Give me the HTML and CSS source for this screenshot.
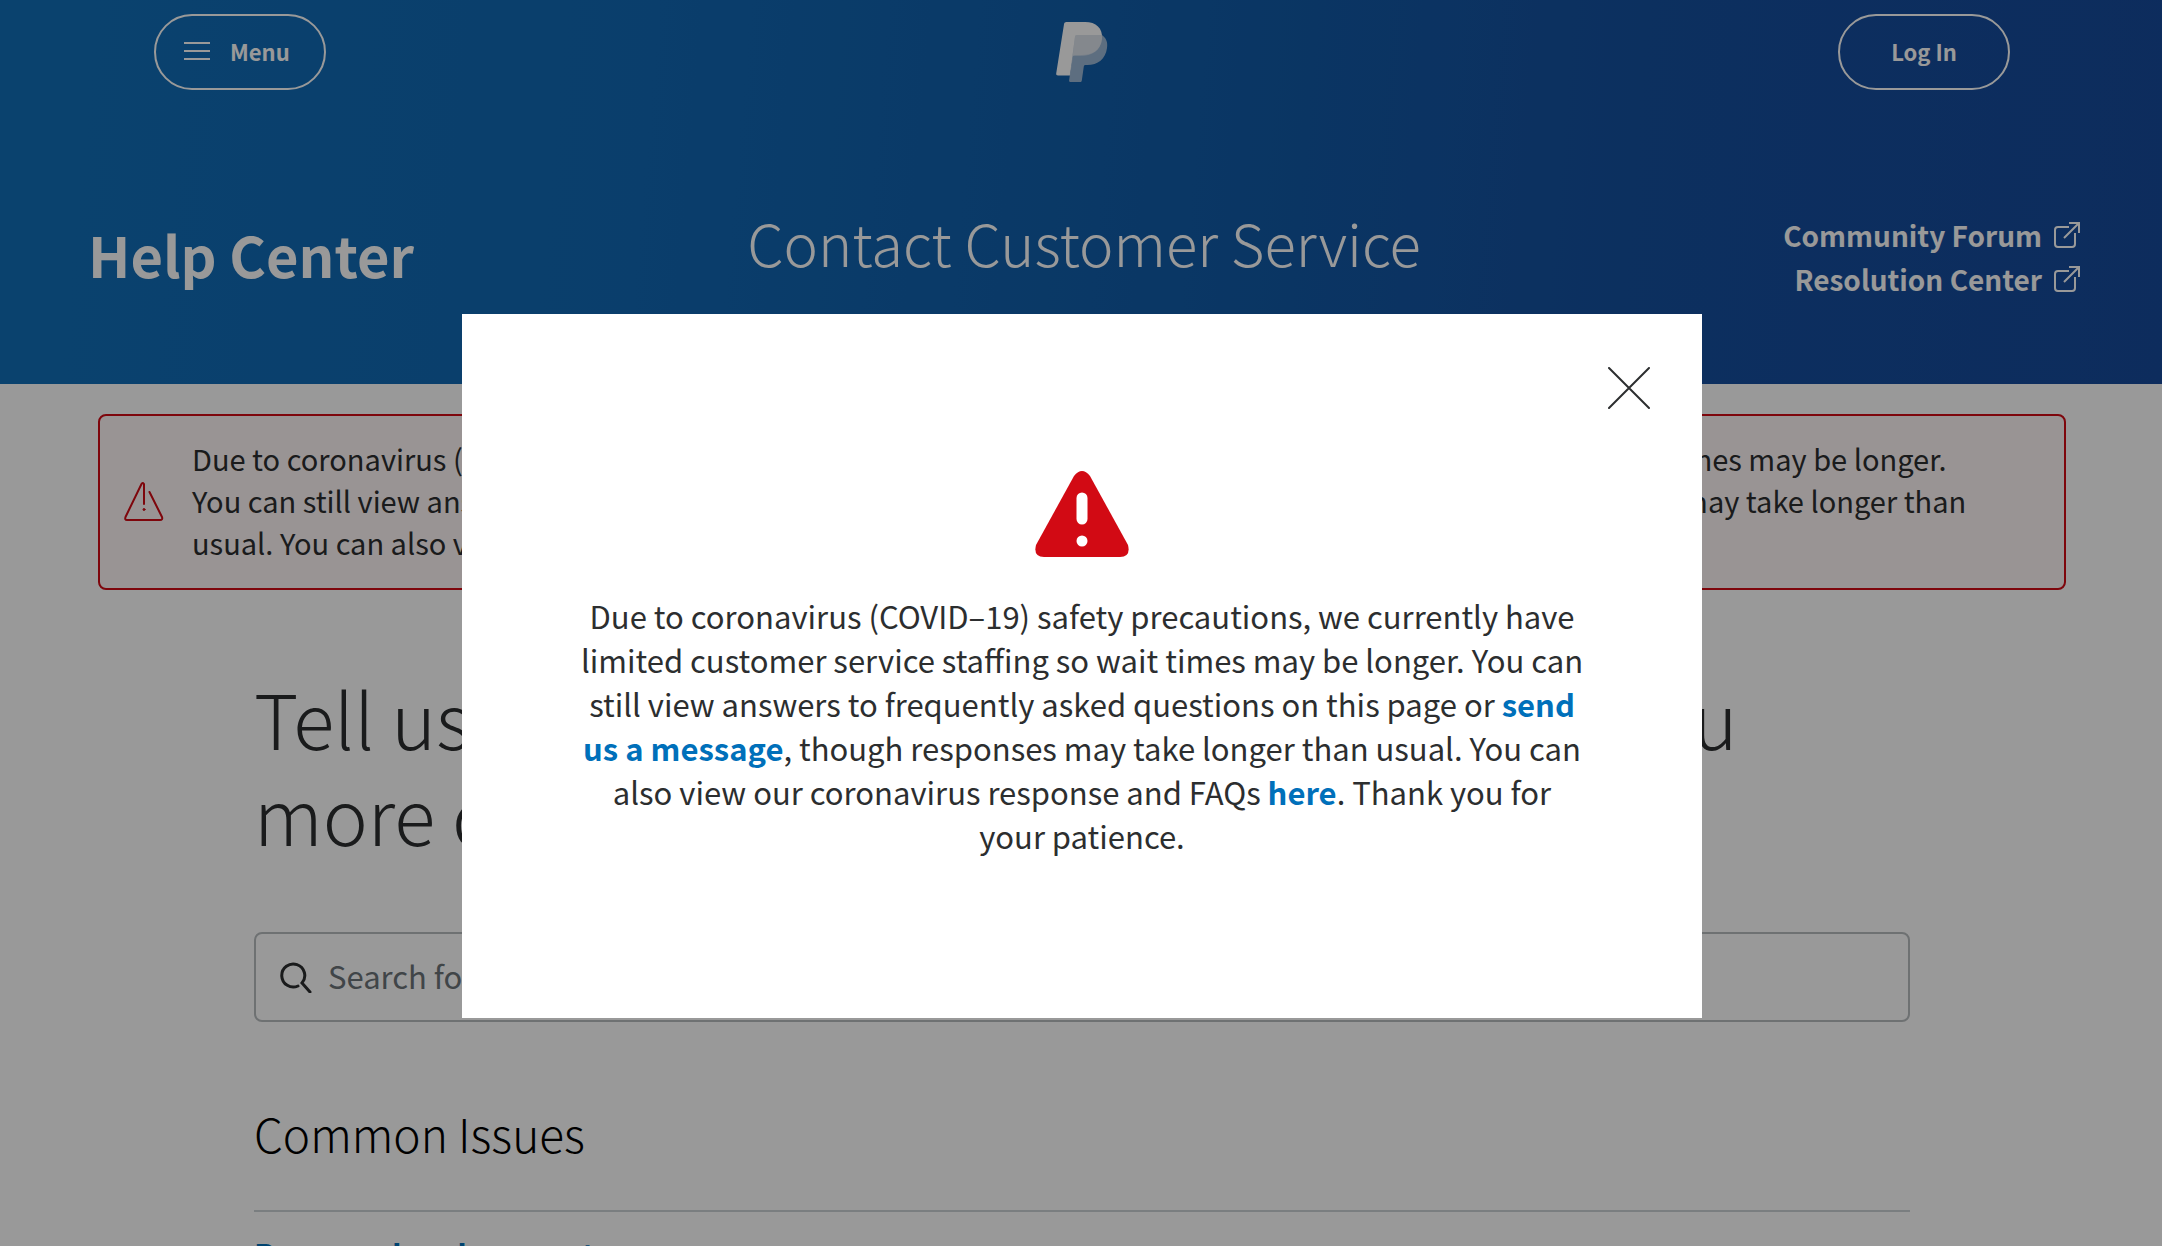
FILE: index.html
```html
<!DOCTYPE html>
<html lang="en">
<head>
    <meta charset="UTF-8">
    <meta name="viewport" content="width=device-width, initial-scale=1.0">
    <title>Contact Customer Service</title>
    <link rel="stylesheet" href="styles.css">
</head>
<body>
    <header class="header">
        <nav class="topbar">
            <button type="button" class="pill">
                <svg class="burger" width="26" height="18" viewBox="0 0 26 18" aria-hidden="true">
                    <path d="M0 1h26M0 9h26M0 17h26" stroke="currentColor" stroke-width="2"/>
                </svg>
                Menu
            </button>
            <a href="#" class="logo" aria-label="PayPal">
                <svg width="52" height="60" viewBox="0 0 52 60">
                    <path d="M10.500 0H29C40 0 47 6 46 17C44.500 29 36 34 24 34H17L14 53.500H2C.7 53.500 0 52.600.2 51.500L8 2.300C8.200.9 9.100 0 10.500 0Z" fill="#fff"/>
                    <path d="M21 13H46C50 16 52 20 51 26C49.500 37 42 43 31 43H29.500C28.500 43 28 43.500 27.800 44.500L25.800 58.500C25.600 59.500 25 60 24 60H14.500C13.500 60 13 59.400 13.100 58.500L19 15C19.200 13.700 19.700 13 21 13Z" fill="#b5c8dd" fill-opacity=".85"/>
                    <path d="M21 13H46Q46.300 15 46 17C44.500 29 36 33 26 33H19C17.500 33 16.800 33.700 16.500 35L19 15C19.200 13.700 19.700 13 21 13Z" fill="#eef0f2" fill-opacity=".6"/>
                </svg>
            </a>
            <a href="#" class="pill">Log In</a>
        </nav>
        <div class="hero">
            <a href="#" class="help-center">Help Center</a>
            <h1>Contact Customer Service</h1>
            <div class="hero-links">
                <a href="#">Community Forum
                    <svg width="26" height="26" viewBox="0 0 26 26" fill="none" stroke="currentColor" stroke-width="2" aria-hidden="true">
                        <path d="M15 5H4Q1 5 1 8V22Q1 25 4 25H18Q21 25 21 22V11M15 1H25V11M25 1L10 16"/>
                    </svg>
                </a>
                <a href="#">Resolution Center
                    <svg width="26" height="26" viewBox="0 0 26 26" fill="none" stroke="currentColor" stroke-width="2" aria-hidden="true">
                        <path d="M15 5H4Q1 5 1 8V22Q1 25 4 25H18Q21 25 21 22V11M15 1H25V11M25 1L10 16"/>
                    </svg>
                </a>
            </div>
        </div>
    </header>

    <div class="notice">
        <svg width="40" height="40" viewBox="0 0 40 40" fill="none" stroke="currentColor" stroke-width="2" stroke-linecap="round" stroke-linejoin="round" aria-hidden="true">
            <path d="M20 22V2Q18.500 0 17.500 2L1.500 35Q.5 38 3 38H36Q39 38 38 35L25.500 10"/>
            <circle cx="20" cy="27.500" r="1" fill="currentColor" stroke-width="1"/>
        </svg>
        <p>Due to coronavirus (COVID–19) safety precautions, we currently have limited customer service staffing so wait times may be longer. You can still view answers to frequently asked questions on this page or <a href="#">send us a message</a>, though responses may take longer than usual. You can also view our coronavirus response and FAQs <a href="#">here</a>. Thank you for your patience.</p>
    </div>

    <main class="content">
        <h2>Tell us about your issue, so we can help you more quickly.</h2>
        <div class="search">
            <svg width="32" height="32" viewBox="0 0 32 32" fill="none" stroke="currentColor" stroke-width="3" stroke-linecap="round" aria-hidden="true">
                <path d="M18 25A11.500 11.500 0 1 1 22 22L30 31"/>
            </svg>
            <input type="text" id="search" aria-label="Search" placeholder="Search for common issues">
        </div>
        <h3>Common Issues</h3>
        <a href="#" class="issue">Password and account</a>
    </main>

    <div class="overlay">
        <div class="modal" role="dialog" aria-modal="true" aria-label="Service notice">
            <button type="button" class="close" aria-label="Close">
                <svg width="42" height="42" viewBox="0 0 42 42" stroke="currentColor" stroke-width="2" stroke-linecap="round">
                    <path d="M1 1L41 41M41 1L1 41"/>
                </svg>
            </button>
            <svg class="warning" width="94" height="86" viewBox="0 0 94 86" aria-hidden="true">
                <path d="M39 5Q47 -5 55 5L93 74Q96 86 85 86H9Q-2 86 1 74Z" fill="#d20a14"/>
                <path d="M47 27V48" stroke="#fff" stroke-width="11" stroke-linecap="round"/>
                <circle cx="47" cy="70" r="5.500" fill="#fff"/>
            </svg>
            <p>Due to coronavirus (COVID–19) safety precautions, we currently have limited customer service staffing so wait times may be longer. You can still view answers to frequently asked questions on this page or <a href="#">send us a message</a>, though responses may take longer than usual. You can also view our coronavirus response and FAQs <a href="#">here</a>. Thank you for<br>your patience.</p>
        </div>
    </div>
</body>
</html>
```
FILE: styles.css
```css
* {
    box-sizing: border-box;
}
body {
    margin: 0;
    height: 100vh;
    overflow: hidden;
    background: #fff;
    color: #2c2e2f;
    font-family: "Noto Sans CJK SC", "Open Sans", sans-serif;
    font-size: 29px;
    line-height: 42px;
}
h1, h2, h3, p {
    margin: 0;
}
h1, h2, h3 {
    font-weight: 300;
}
a {
    color: #0070ba;
    font-weight: 700;
    text-decoration: none;
}
svg {
    display: block;
    flex: none;
}
.header {
    height: 384px;
    color: #fff;
    background: linear-gradient(95deg, #126fb8 0%, #1168b4 30%, #115ca8 55%, #15509f 75%, #164a9c 100%);
}
.header a {
    color: #fff;
}
.topbar {
    display: flex;
    justify-content: space-between;
    align-items: center;
    padding: 14px 152px 14px 154px;
}
.pill {
    display: flex;
    align-items: center;
    justify-content: center;
    gap: 20px;
    width: 172px;
    height: 76px;
    padding: 0 0 2px;
    border: 2px solid #fff;
    border-radius: 38px;
    background: none;
    color: #fff;
    font-family: inherit;
    font-size: 22px;
    font-weight: 700;
}
button.pill {
    justify-content: flex-start;
    padding-left: 28px;
}
.hero {
    display: grid;
    grid-template-columns: 1fr auto 1fr;
    padding: 92px 82px 0 88px;
}
.help-center {
    font-size: 56px;
    line-height: 116px;
}
h1 {
    font-size: 58px;
    line-height: 92px;
}
.hero-links {
    display: grid;
    justify-content: end;
    align-content: start;
    padding-top: 17px;
    font-size: 28px;
}
.hero-links a {
    display: flex;
    justify-content: flex-end;
    align-items: center;
    gap: 12px;
    line-height: 44px;
}
.notice {
    display: flex;
    align-items: center;
    gap: 28px;
    margin: 30px 96px 0 98px;
    padding: 21px 96px 25px 24px;
    border: 2px solid #d20a14;
    border-radius: 8px;
    background: #fff7f7;
}
.notice > svg {
    margin-top: 4px;
    color: #d20a14;
}
.content {
    margin: 79px 252px 0 254px;
}
h2 {
    font-size: 76px;
    line-height: 96px;
}
.search {
    display: flex;
    align-items: center;
    gap: 16px;
    height: 90px;
    margin-top: 71px;
    padding: 0 24px;
    border: 2px solid #b7bcbf;
    border-radius: 8px;
}
.search input {
    flex: 1;
    padding: 0 0 4px;
    border: 0;
    outline: 0;
    background: none;
    font-family: inherit;
    font-size: 31px;
}
.search input::placeholder {
    color: #6c7378;
    opacity: 1;
}
h3 {
    padding: 78px 0 44px;
    border-bottom: 2px solid #cbd2d6;
    color: #000;
    font-size: 46px;
    line-height: 66px;
}
.issue {
    display: block;
    padding-top: 20px;
    font-size: 31px;
    line-height: 44px;
}
.overlay {
    position: fixed;
    inset: 0;
    padding: 314px 0 0 2px;
    background: rgba(0, 0, 0, 0.4);
}
.modal {
    position: relative;
    width: 1240px;
    max-width: 100%;
    height: 704px;
    margin: 0 auto;
    padding: 157px 112px 0;
    background: #fff;
    font-size: 31px;
    line-height: 44px;
    text-align: center;
}
.close {
    position: absolute;
    top: 53px;
    right: 52px;
    padding: 0;
    border: 0;
    background: none;
    color: #2c2e2f;
    cursor: pointer;
}
.warning {
    margin: 0 auto 37px;
}
```
